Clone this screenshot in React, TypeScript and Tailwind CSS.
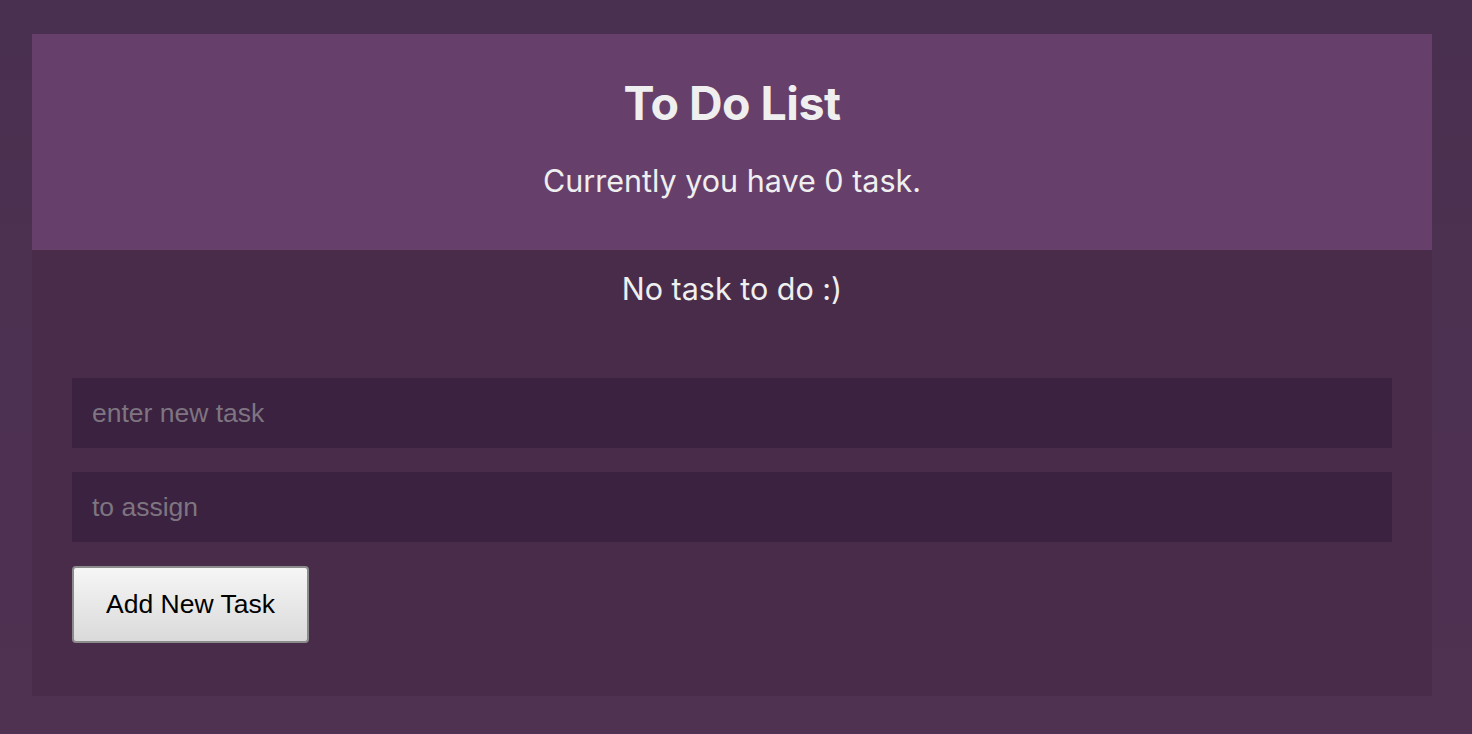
import { useState } from "react";

const App = () => {
  const [task, setTask] = useState("");
  const [assignee, setAssignee] = useState("");
  const tasks: string[] = [];

  return (
    <div className="min-h-screen bg-gradient-to-b from-[#4a3050] to-[#4f3152] pt-[34px] pl-[32px] pr-[40px] pb-[38px]">
      <div className="w-[1400px]">
        <div className="bg-[#673f6b] text-[#efefef] text-center pt-[40px] pb-[51px] font-['Inter',sans-serif]">
          <h1 className="text-[46.5px] font-bold leading-[58px] tracking-[-0.5px]">
            To Do List
          </h1>
          <p className="mt-[31px] text-[30.5px] leading-[36px]">
            Currently you have {tasks.length} task.
          </p>
        </div>
        <div className="bg-[#482c4a] pt-[21px] pb-[53px] px-[40px]">
          <p className="text-center text-[#efefef] text-[30.5px] leading-[36px] font-['Inter',sans-serif]">
            No task to do :)
          </p>
          <div className="mt-[71px] flex flex-col gap-[24px] font-['Liberation_Sans',Arial,sans-serif]">
            <input
              value={task}
              onChange={(e) => setTask(e.target.value)}
              placeholder="enter new task"
              className="h-[70px] w-full bg-[#3a2240] px-[20px] text-[26.5px] text-[#efefef] placeholder:text-[#7e7580] outline-none"
            />
            <input
              value={assignee}
              onChange={(e) => setAssignee(e.target.value)}
              placeholder="to assign"
              className="h-[70px] w-full bg-[#3a2240] px-[20px] text-[26.5px] text-[#efefef] placeholder:text-[#7e7580] outline-none"
            />
            <div>
              <button className="h-[77px] w-[237px] rounded-[4px] border-2 border-[#8c8c8c] bg-gradient-to-b from-[#f6f6f6] to-[#dadada] text-[26.5px] text-black">
                Add New Task
              </button>
            </div>
          </div>
        </div>
      </div>
    </div>
  );
};

export default App;
